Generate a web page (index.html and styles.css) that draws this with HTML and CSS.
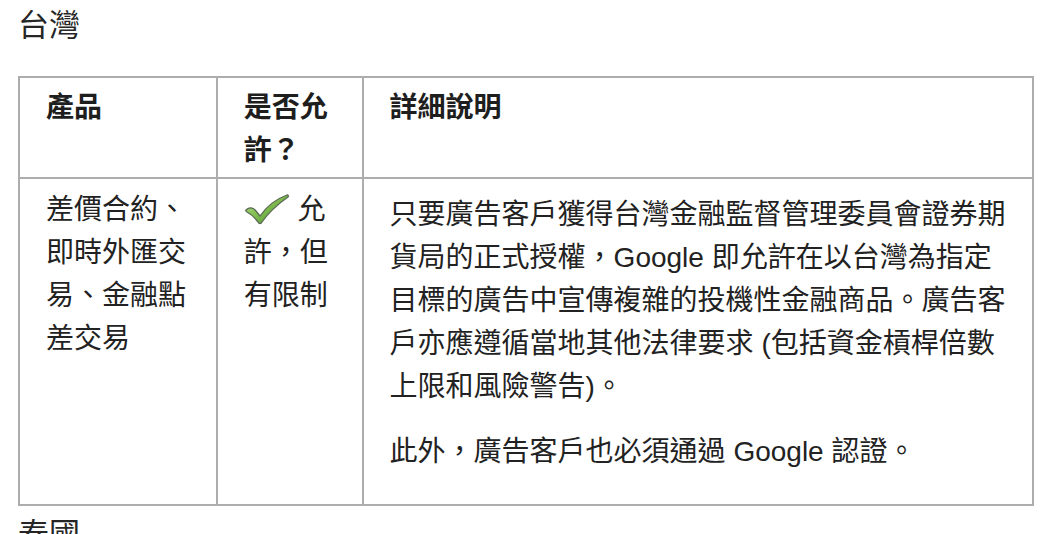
FILE: index.html
```html
<!DOCTYPE html>
<html lang="zh-Hant">
<head>
<meta charset="utf-8">
<link rel="stylesheet" href="styles.css">
</head>
<body>
<h2 class="region">台灣</h2>
<table class="policy">
  <colgroup>
    <col class="c1"><col class="c2"><col class="c3">
  </colgroup>
  <thead>
    <tr><th>產品</th><th>是否允許？</th><th>詳細說明</th></tr>
  </thead>
  <tbody>
    <tr>
      <td>差價合約、即時外匯交易、金融點差交易</td>
      <td><svg class="check" viewBox="0 0 46 32" width="46" height="32" aria-hidden="true">
        <defs>
          <linearGradient id="g" x1="0" y1="0" x2="1" y2="1">
            <stop offset="0" stop-color="#b8e08a"/>
            <stop offset="0.5" stop-color="#7dba4c"/>
            <stop offset="1" stop-color="#3f8a2a"/>
          </linearGradient>
        </defs>
        <path d="M2 17 C5 14 9 14 12 18 L16 23 C23 13 32 6 43 2 C44 2 45 3 44 4 C34 11 25 19 18 29 C17 31 15 31 14 29 C11 25 7 21 3 19 C2 18.5 1.5 17.5 2 17 Z" fill="url(#g)" stroke="#5b6b55" stroke-width="1.3" stroke-linejoin="round"/>
      </svg> 允許，但有限制</td>
      <td class="desc">
        <p>只要廣告客戶獲得台灣金融監督管理委員會證券期貨局的正式授權，Google 即允許在以台灣為指定目標的廣告中宣傳複雜的投機性金融商品。廣告客戶亦應遵循當地其他法律要求 (包括資金槓桿倍數上限和風險警告)。</p>
        <p>此外，廣告客戶也必須通過 Google 認證。</p>
      </td>
    </tr>
  </tbody>
</table>
<h2 class="region">泰國</h2>
</body>
</html>
```

FILE: styles.css
```css
html, body {
  margin: 0;
  padding: 0;
  background: #ffffff;
}
body {
  padding: 0 18px 0 18px;
  font-family: "Liberation Sans", "Noto Sans CJK TC", sans-serif;
  color: #222222;
}
.region {
  font-size: 31px;
  font-weight: normal;
  line-height: 40px;
  margin: 6px 0 30px 0;
  color: #262626;
}
.policy {
  width: 1016px;
  border-collapse: collapse;
  border: 2px solid #adadad;
  font-size: 28px;
  line-height: 43px;
  margin-bottom: 9px;
}
.c1 { width: 198px; }
.c2 { width: 146px; }
.c3 { width: 672px; }
.policy th,
.policy td {
  border: 2px solid #adadad;
  vertical-align: top;
  text-align: left;
}
.policy th {
  font-weight: bold;
  padding: 8px 26px 5px 26px;
  color: #1e1e1e;
}
.policy td {
  padding: 9px 26px 12px 26px;
}
.policy td.desc {
  padding-right: 18px;
  padding-bottom: 9px;
}
.desc p {
  margin: 0 0 22px 0;
}
.desc p:first-child {
  margin-top: 5px;
}
.check {
  vertical-align: -6px;
}
```
